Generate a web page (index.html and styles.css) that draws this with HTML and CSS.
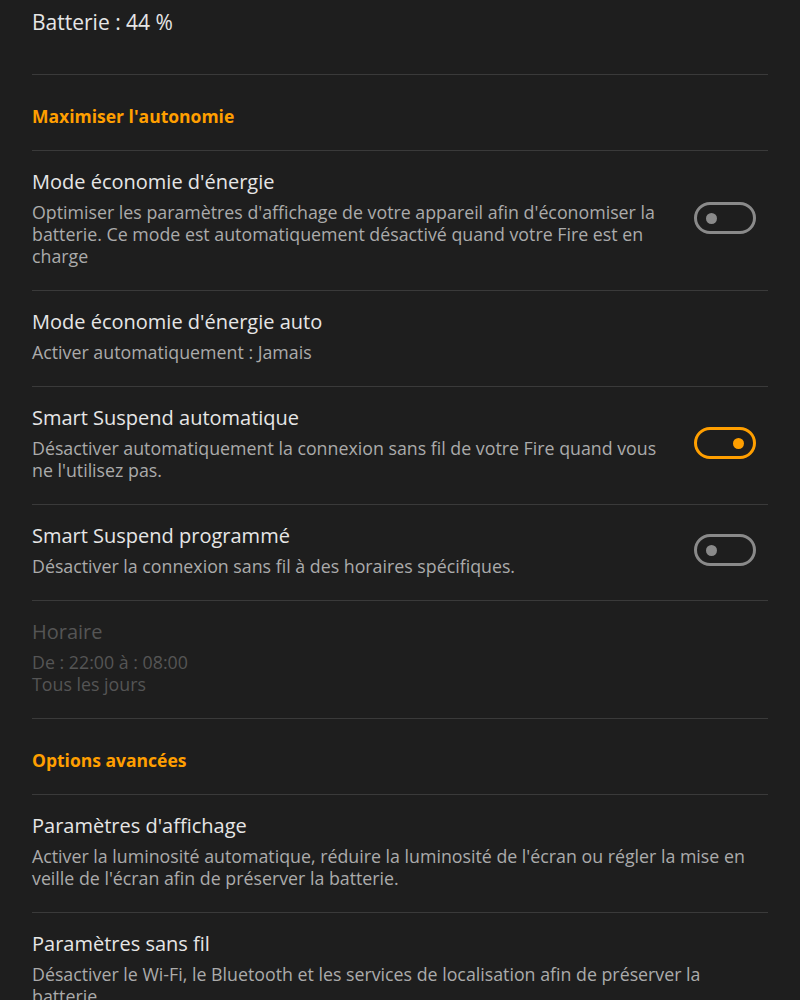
FILE: index.html
```html
<!DOCTYPE html>
<html lang="fr">
<head>
    <meta charset="UTF-8">
    <meta name="viewport" content="width=device-width, initial-scale=1.0">
    <title>Batterie</title>
    <link rel="stylesheet" href="styles.css">
</head>
<body>
    <div class="settings">
        <div class="battery">Batterie : 44 %</div>

        <div class="section-title">Maximiser l'autonomie</div>

        <div class="row">
            <div class="text">
                <div class="title">Mode économie d'énergie</div>
                <div class="desc">Optimiser les paramètres d'affichage de votre appareil afin d'économiser la batterie. Ce mode est automatiquement désactivé quand votre Fire est en charge</div>
            </div>
            <div class="toggle"></div>
        </div>

        <div class="row">
            <div class="text">
                <div class="title">Mode économie d'énergie auto</div>
                <div class="desc">Activer automatiquement : Jamais</div>
            </div>
        </div>

        <div class="row">
            <div class="text">
                <div class="title">Smart Suspend automatique</div>
                <div class="desc">Désactiver automatiquement la connexion sans fil de votre Fire quand vous ne l'utilisez pas.</div>
            </div>
            <div class="toggle on"></div>
        </div>

        <div class="row">
            <div class="text">
                <div class="title">Smart Suspend programmé</div>
                <div class="desc">Désactiver la connexion sans fil à des horaires spécifiques.</div>
            </div>
            <div class="toggle"></div>
        </div>

        <div class="row disabled">
            <div class="text">
                <div class="title">Horaire</div>
                <div class="desc">De : 22:00 à : 08:00<br>Tous les jours</div>
            </div>
        </div>

        <div class="section-title">Options avancées</div>

        <div class="row">
            <div class="text">
                <div class="title">Paramètres d'affichage</div>
                <div class="desc">Activer la luminosité automatique, réduire la luminosité de l'écran ou régler la mise en veille de l'écran afin de préserver la batterie.</div>
            </div>
        </div>

        <div class="row">
            <div class="text">
                <div class="title">Paramètres sans fil</div>
                <div class="desc">Désactiver le Wi-Fi, le Bluetooth et les services de localisation afin de préserver la batterie.</div>
            </div>
        </div>
    </div>
</body>
</html>
```

FILE: styles.css
```css
body {
    margin: 0;
    padding: 0;
    background: #1e1e1e;
    color: #e6e6e6;
    font-family: "Open Sans", "Noto Sans", sans-serif;
    overflow: hidden;
}
.settings {
    padding: 0 32px;
}
.battery {
    font-size: 21px;
    line-height: 26px;
    padding: 9px 0 39px;
    border-bottom: 1px solid #3a3a3a;
}
.section-title {
    color: #ff9f00;
    font-weight: bold;
    font-size: 17.5px;
    line-height: 24px;
    padding: 29px 0 22px;
    border-bottom: 1px solid #3a3a3a;
}
.row {
    display: flex;
    align-items: center;
    gap: 16px;
    padding: 17px 0 23px;
    border-bottom: 1px solid #3a3a3a;
}
.text {
    flex: 1;
}
.title {
    font-size: 20px;
    line-height: 28px;
    margin-bottom: 5px;
}
.desc {
    font-size: 17.8px;
    line-height: 22px;
    color: #ababab;
}
.disabled .title,
.disabled .desc {
    color: #555;
}
.toggle {
    flex: none;
    width: 56px;
    height: 26px;
    margin-right: 12px;
    border: 3px solid #8a8a8a;
    border-radius: 16px;
    position: relative;
}
.toggle::after {
    content: "";
    position: absolute;
    left: 9px;
    top: 8px;
    width: 11px;
    height: 11px;
    border-radius: 50%;
    background: #8a8a8a;
}
.toggle.on {
    border-color: #ff9f00;
}
.toggle.on::after {
    left: auto;
    right: 9px;
    background: #ff9f00;
}
```
